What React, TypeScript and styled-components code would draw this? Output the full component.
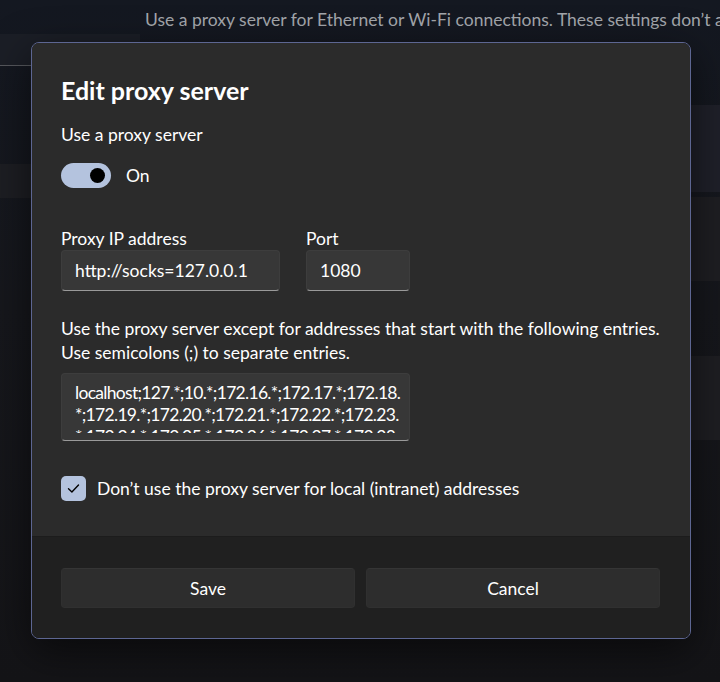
import styled, { createGlobalStyle } from 'styled-components';

const GlobalStyle = createGlobalStyle`
  html, body {
    margin: 0;
    padding: 0;
    background: #14171f;
  }
  body {
    font-family: 'Lato', 'Noto Sans', sans-serif;
    color: #ffffff;
  }
`;

const Page = styled.div`
  position: relative;
  width: 720px;
  height: 682px;
  overflow: hidden;
  background: linear-gradient(180deg, #141821 0%, #16171c 45%, #141417 100%);
  display: grid;
  grid-template-columns: 140px 1fr;
`;

const Nav = styled.div`
  display: flex;
  flex-direction: column;
  padding-top: 34px;
`;

const NavItem = styled.div<{ $tone: string; $h: number; $gap: number; $line?: boolean }>`
  height: ${p => p.$h}px;
  margin-bottom: ${p => p.$gap}px;
  background: ${p => p.$tone};
  border-bottom: ${p => (p.$line ? '1px solid #55575c' : 'none')};
`;

const Content = styled.div`
  display: flex;
  flex-direction: column;
  padding-left: 5px;
  min-width: 0;
  overflow: hidden;
`;

const Intro = styled.p`
  margin: 8px 0 0;
  font-size: 17.5px;
  line-height: 24px;
  color: #a3a6ab;
  white-space: nowrap;
`;

const Card = styled.div<{ $tone: string; $h: number; $top: number }>`
  height: ${p => p.$h}px;
  margin-top: ${p => p.$top}px;
  background: ${p => p.$tone};
`;

const Dialog = styled.div`
  position: absolute;
  left: 31px;
  top: 42px;
  width: 658px;
  height: 595px;
  border: 1px solid #5d6692;
  border-radius: 8px;
  overflow: hidden;
  display: flex;
  flex-direction: column;
  box-shadow: 0 12px 40px rgba(0, 0, 0, 0.55);
`;

const Body = styled.div`
  flex: 1;
  background: #2b2b2b;
  padding: 29px 30px 0 29px;
  display: flex;
  flex-direction: column;
`;

const Title = styled.h2`
  margin: 0;
  font-size: 25px;
  line-height: 36px;
  font-weight: 700;
  color: #ffffff;
`;

const Text = styled.div<{ $top: number }>`
  margin-top: ${p => p.$top}px;
  font-size: 17.5px;
  line-height: 24px;
  color: #ffffff;
`;

const ToggleRow = styled.div`
  margin-top: 16px;
  display: flex;
  align-items: center;
  gap: 15px;
  height: 25px;
  font-size: 17.5px;
`;

const Track = styled.div`
  width: 50px;
  height: 25px;
  border-radius: 13px;
  background: #b4c3de;
  display: flex;
  align-items: center;
  justify-content: flex-end;
  padding-right: 6px;
  box-sizing: border-box;
`;

const Knob = styled.div`
  width: 15px;
  height: 15px;
  border-radius: 50%;
  background: #000000;
`;

const Fields = styled.div`
  margin-top: 40px;
  display: flex;
  gap: 26px;
`;

const Field = styled.div`
  display: flex;
  flex-direction: column;
`;

const Label = styled.label`
  font-size: 17.5px;
  line-height: 22px;
  color: #ffffff;
`;

const Input = styled.div<{ $w: number }>`
  width: ${p => p.$w}px;
  height: 41px;
  box-sizing: border-box;
  background: #373737;
  border: 1px solid #3d3d3d;
  border-bottom-color: #9a9a9a;
  border-radius: 4px;
  padding: 0 12px 0 13px;
  display: flex;
  align-items: center;
  font-size: 17.5px;
  color: #ffffff;
`;

const TextArea = styled.div`
  margin-top: 8px;
  width: 349px;
  height: 68px;
  box-sizing: border-box;
  background: #373737;
  border: 1px solid #3d3d3d;
  border-bottom-color: #9a9a9a;
  border-radius: 4px;
  padding: 7px 6px 0 13px;
`;

const Viewport = styled.div`
  height: 52px;
  overflow: hidden;
  padding-top: 1px;
  box-sizing: border-box;
  font-size: 17.5px;
  line-height: 22px;
  letter-spacing: -0.7px;
  white-space: nowrap;
`;

const CheckRow = styled.div`
  margin-top: 35px;
  display: flex;
  align-items: center;
  gap: 11px;
  font-size: 17.5px;
`;

const Box = styled.div`
  width: 25px;
  height: 25px;
  border-radius: 5px;
  background: #b4c3de;
  display: flex;
  align-items: center;
  justify-content: center;
`;

const Footer = styled.div`
  background: #202020;
  border-top: 1px solid #1c1c1c;
  padding: 31px 30px 30px 29px;
  display: grid;
  grid-template-columns: 1fr 1fr;
  gap: 11px;
`;

const Button = styled.button`
  height: 40px;
  border: 1px solid #303030;
  border-top-color: #353535;
  border-radius: 4px;
  background: #2d2d2d;
  color: #ffffff;
  font-family: inherit;
  font-size: 17.5px;
`;

const bypass = [
  'localhost;127.*;10.*;172.16.*;172.17.*;172.18.',
  '*;172.19.*;172.20.*;172.21.*;172.22.*;172.23.',
  '*;172.24.*;172.25.*;172.26.*;172.27.*;172.28.',
];

export default function App() {
  return (
    <>
      <GlobalStyle />
      <Page>
        <Nav>
          <NavItem $tone="#1b1e26" $h={31} $gap={98} $line />
          <NavItem $tone="#1d1e23" $h={34} $gap={0} />
        </Nav>
        <Content>
          <Intro>Use a proxy server for Ethernet or Wi-Fi connections. These settings don’t apply to VPN connections.</Intro>
          <Card $tone="#1f2029" $h={87} $top={73} />
          <Card $tone="#1e1e22" $h={84} $top={5} />
          <Card $tone="#1e1e22" $h={84} $top={75} />
        </Content>

        <Dialog>
          <Body>
            <Title>Edit proxy server</Title>
            <Text $top={15}>Use a proxy server</Text>
            <ToggleRow>
              <Track>
                <Knob />
              </Track>
              <span>On</span>
            </ToggleRow>
            <Fields>
              <Field>
                <Label>Proxy IP address</Label>
                <Input $w={219}>http://socks=127.0.0.1</Input>
              </Field>
              <Field>
                <Label>Port</Label>
                <Input $w={104}>1080</Input>
              </Field>
            </Fields>
            <Text $top={26}>
              Use the proxy server except for addresses that start with the following entries.
              <br />
              Use semicolons (;) to separate entries.
            </Text>
            <TextArea>
              <Viewport>
                {bypass.map(line => (
                  <div key={line}>{line}</div>
                ))}
              </Viewport>
            </TextArea>
            <CheckRow>
              <Box>
                <svg width="15" height="15" viewBox="0 0 15 15" fill="none">
                  <path d="M2.5 7.8 L5.9 11 L12.5 4" stroke="#000" strokeWidth="1.4" strokeLinecap="round" strokeLinejoin="round" />
                </svg>
              </Box>
              <span>Don’t use the proxy server for local (intranet) addresses</span>
            </CheckRow>
          </Body>
          <Footer>
            <Button>Save</Button>
            <Button>Cancel</Button>
          </Footer>
        </Dialog>
      </Page>
    </>
  );
}
